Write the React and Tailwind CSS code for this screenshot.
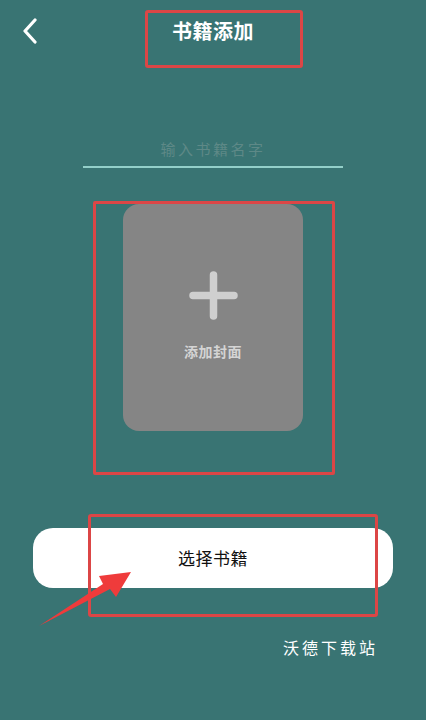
export default function App() {
  const font = { fontFamily: '"Noto Sans CJK SC", "Noto Sans", sans-serif' };
  return (
    <div className="relative w-full h-[720px] bg-[#397473] overflow-hidden flex flex-col" style={font}>
      <div className="h-[62px] flex items-center px-[22px]">
        <div className="w-[20px] flex items-center">
          <svg width="16" height="26" viewBox="0 0 16 26" fill="none">
            <path d="M13 2 L3 13 L13 24" stroke="white" strokeWidth="3.2" strokeLinecap="round" strokeLinejoin="round" />
          </svg>
        </div>
        <div className="flex-1 text-center text-white text-[20px] font-bold leading-none tracking-[0.5px]">书籍添加</div>
        <div className="w-[20px]" />
      </div>

      <div className="mt-[75px] mx-auto w-[260px] border-b-2 border-[#93cfc9] pb-[5px] text-center text-[15px] leading-[24px] tracking-[2.5px] text-[#5e8987]">
        输入书籍名字
      </div>

      <div className="mt-[36px] mx-auto w-[180px] h-[227px] rounded-[16px] bg-[#858585] flex flex-col items-center">
        <svg className="mt-[67px]" width="49" height="49" viewBox="0 0 49 49">
          <path d="M24.5 4 V45 M4 24.5 H45" stroke="#cfcfcf" strokeWidth="7.5" strokeLinecap="round" />
        </svg>
        <div className="mt-[21px] text-[14px] font-bold text-[#d4d4d4] tracking-[0.5px] leading-[20px]">添加封面</div>
      </div>

      <div className="mt-[97px] mx-[33px] h-[60px] rounded-[20px] bg-white flex items-center justify-center text-[17px] text-[#111] tracking-[0.5px]">
        选择书籍
      </div>

      <div className="mt-[47px] self-end pr-[48px] text-white text-[16px] tracking-[3px] leading-[24px]">沃德下载站</div>

      <div className="absolute left-[145px] top-[10px] w-[158px] h-[58px] border-[3px] border-[#dc4646] rounded-[3px]" />
      <div className="absolute left-[93px] top-[201px] w-[242px] h-[274px] border-[3px] border-[#dc4646] rounded-[2px]" />
      <div className="absolute left-[88px] top-[514px] w-[290px] h-[103px] border-[3px] border-[#dc4646] rounded-[3px]" />

      <svg className="absolute left-0 top-0" width="426" height="720" viewBox="0 0 426 720" style={{ pointerEvents: 'none' }}>
        <polygon points="39,626 103,584 99,576 131,572 116,597 110,589" fill="#ef3b3b" />
      </svg>
    </div>
  );
}
